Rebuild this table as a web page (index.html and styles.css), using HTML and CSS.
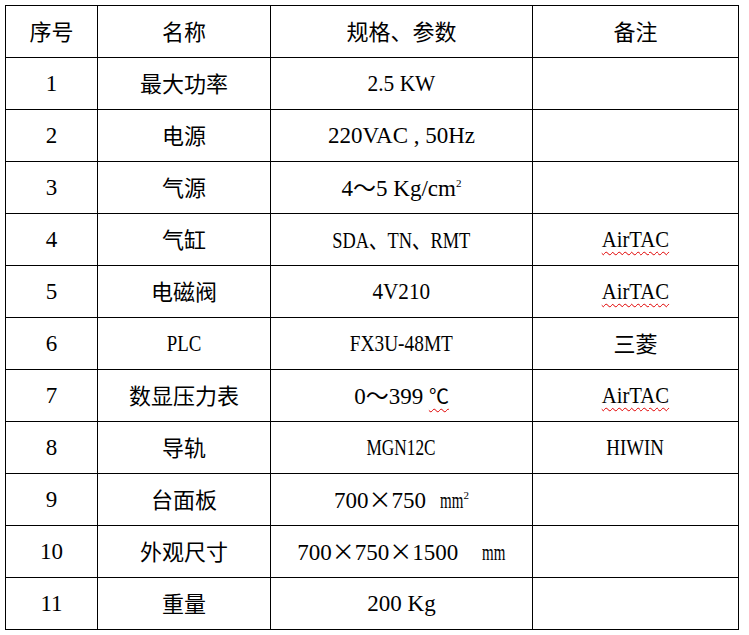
FILE: index.html
```html
<!DOCTYPE html>
<html lang="zh-CN">
<head>
<meta charset="utf-8">
<title>参数表</title>
<link rel="stylesheet" href="styles.css">
</head>
<body>
<div class="sheet">
  <div class="cell cj">序号</div><div class="cell cj">名称</div><div class="cell cj">规格、参数</div><div class="cell cj">备注</div>

  <div class="cell">1</div><div class="cell cj">最大功率</div><div class="cell"><span class="t s93">2.5 KW</span></div><div class="cell"></div>
  <div class="cell">2</div><div class="cell cj">电源</div><div class="cell"><span class="t">220VAC , 50Hz</span></div><div class="cell"></div>
  <div class="cell">3</div><div class="cell cj">气源</div><div class="cell"><span class="t">4<span class="cj">～</span>5 Kg/cm<sup>2</sup></span></div><div class="cell"></div>
  <div class="cell">4</div><div class="cell cj">气缸</div><div class="cell"><span class="t s80">SDA<span class="cj">、</span>TN<span class="cj">、</span>RMT</span></div><div class="cell"><span class="t s90 spell">AirTAC</span></div>
  <div class="cell">5</div><div class="cell cj">电磁阀</div><div class="cell"><span class="t s92">4V210</span></div><div class="cell"><span class="t s90 spell">AirTAC</span></div>
  <div class="cell">6</div><div class="cell"><span class="t s82">PLC</span></div><div class="cell"><span class="t s84">FX3U-48MT</span></div><div class="cell cj">三菱</div>
  <div class="cell">7</div><div class="cell cj">数显压力表</div><div class="cell"><span class="t">0<span class="cj">～</span>399 <span class="spell deg">℃</span></span></div><div class="cell"><span class="t s90 spell">AirTAC</span></div>
  <div class="cell">8</div><div class="cell cj">导轨</div><div class="cell"><span class="t s75">MGN12C</span></div><div class="cell"><span class="t s82">HIWIN</span></div>
  <div class="cell">9</div><div class="cell cj">台面板</div><div class="cell"><span class="t">700<span class="cj">×</span>750<span class="gap"></span><span class="mm">mm</span><sup>2</sup></span></div><div class="cell"></div>
  <div class="cell">10</div><div class="cell cj">外观尺寸</div><div class="cell"><span class="t">700<span class="cj">×</span>750<span class="cj">×</span>1500<span class="gap wide"></span><span class="mm">mm</span></span></div><div class="cell"></div>
  <div class="cell">11</div><div class="cell cj">重量</div><div class="cell"><span class="t">200 Kg</span></div><div class="cell"></div>
</div>
</body>
</html>
```

FILE: styles.css
```css
html, body {
  margin: 0;
  padding: 0;
  background: #ffffff;
}

body {
  font-family: "Liberation Serif", "Noto Sans CJK SC", serif;
  font-size: 23px;
  color: #000000;
}

.sheet {
  margin: 5px 0 0 5px;
  width: 734px;
  display: grid;
  grid-template-columns: 91px 172px 261px 205px;
  grid-auto-rows: 51px;
  gap: 1px;
  padding: 1px;
  box-sizing: border-box;
  background: #000000;
}

.cell {
  background: #ffffff;
  display: flex;
  align-items: center;
  justify-content: center;
  white-space: pre;
  line-height: 1;
}

.cj {
  font-family: "Noto Sans CJK SC", sans-serif;
  font-weight: 400;
}

.cell.cj {
  font-size: 22px;
  padding-bottom: 3px;
}

.t {
  display: inline-block;
  white-space: pre;
  transform-origin: center center;
}

.s75 { transform: scaleX(0.75); }
.s80 { transform: scaleX(0.80); }
.s82 { transform: scaleX(0.82); }
.s84 { transform: scaleX(0.84); }
.s90 { transform: scaleX(0.90); }
.s92 { transform: scaleX(0.92); }
.s93 { transform: scaleX(0.93); }

sup {
  font-size: 11px;
  line-height: 0;
  vertical-align: 9px;
}

.spell {
  text-decoration: underline wavy #e00000;
  text-decoration-thickness: 1px;
  text-underline-offset: 4px;
}

.deg {
  font-family: "Noto Sans CJK SC", sans-serif;
  font-size: 20px;
}

.gap {
  display: inline-block;
  width: 14px;
}

.gap.wide {
  width: 24px;
}

.mm {
  display: inline-block;
  transform: scaleX(0.65);
  transform-origin: left center;
  margin-right: -12.5px;
}
```
